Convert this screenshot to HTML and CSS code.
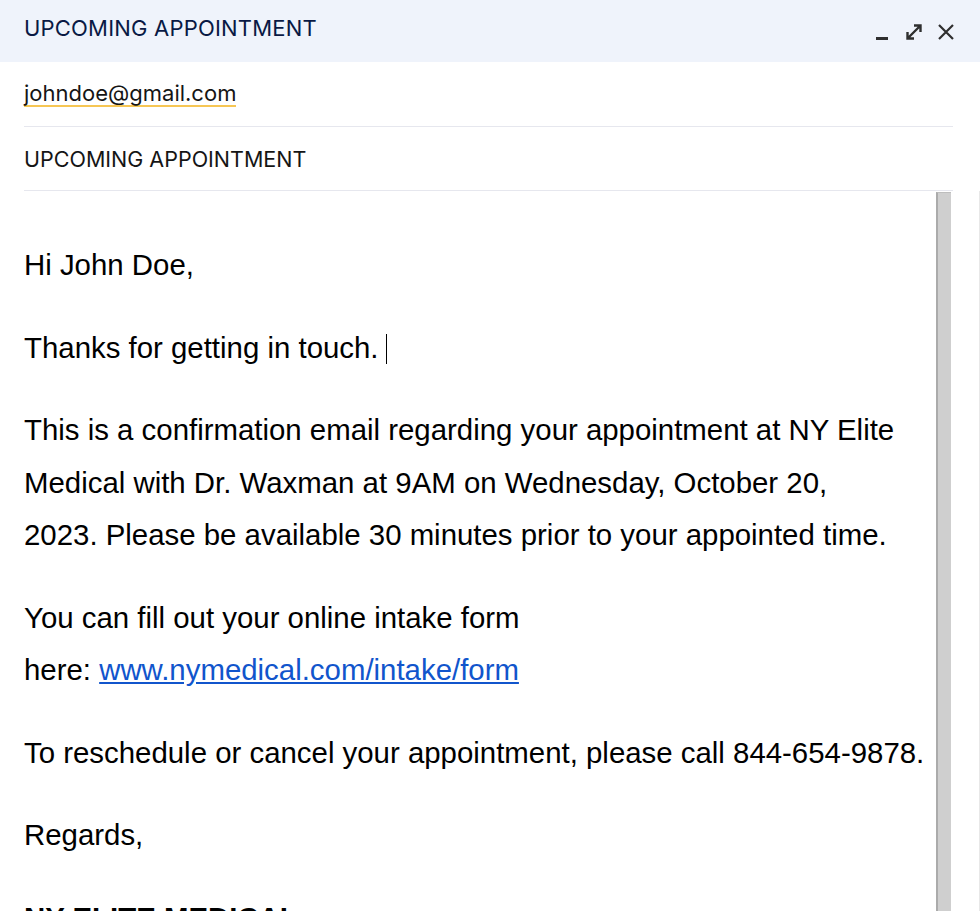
FILE: index.html
```html
<!DOCTYPE html>
<html>
<head>
<meta charset="utf-8">
<link rel="stylesheet" href="styles.css">
</head>
<body>
<div class="window">
  <div class="header">
    <div class="title">UPCOMING APPOINTMENT</div>
    <div class="controls">
      <svg class="ic" width="20" height="20" viewBox="0 0 20 20"><rect x="4" y="15" width="12" height="3" fill="#2f2f2f"/></svg>
      <svg class="ic" width="20" height="20" viewBox="0 0 20 20"><path d="M3.5 16.5 L16.5 3.5 M10 3.5 H16.5 V10 M3.5 10 V16.5 H10" stroke="#2f2f2f" stroke-width="2.4" fill="none"/></svg>
      <svg class="ic" width="20" height="20" viewBox="0 0 20 20"><path d="M3 3 L17 17 M17 3 L3 17" stroke="#2f2f2f" stroke-width="2.2" fill="none"/></svg>
    </div>
  </div>
  <div class="fields">
    <div class="row to"><span class="chip">johndoe@gmail.com</span></div>
    <div class="row subject">UPCOMING APPOINTMENT</div>
  </div>
  <div class="main">
    <div class="content">
      <p>Hi John Doe,</p>
      <p>Thanks for getting in touch.<span class="caret"></span></p>
      <p>This is a confirmation email regarding your appointment at NY Elite<br>Medical with Dr. Waxman at 9AM on Wednesday, October 20,<br>2023. Please be available 30 minutes prior to your appointed time.</p>
      <p>You can fill out your online intake form<br>here: <a href="#">www.nymedical.com/intake/form</a></p>
      <p>To reschedule or cancel your appointment, please call 844-654-9878.</p>
      <p>Regards,</p>
      <p class="sig">NY ELITE MEDICAL</p>
    </div>
    <div class="scrollbar"></div>
    <div class="edge"></div>
  </div>
</div>
</body>
</html>
```
FILE: styles.css
```css
html, body {
  margin: 0;
  padding: 0;
  background: #ffffff;
}
.window {
  width: 980px;
  height: 911px;
  overflow: hidden;
  display: flex;
  flex-direction: column;
  background: #ffffff;
}
.header {
  height: 62px;
  flex: none;
  background: #eff3fb;
  display: flex;
  align-items: center;
  justify-content: space-between;
  padding: 0 24px;
}
.title {
  font-family: Inter, "Liberation Sans", sans-serif;
  font-size: 22px;
  color: #091944;
  letter-spacing: 0.2px;
  padding-bottom: 6px;
}
.controls {
  display: flex;
  gap: 12px;
  align-items: center;
  padding-top: 2px;
}
.ic { display: block; }
.fields {
  margin: 0 27px 0 24px;
  font-family: Inter, "Liberation Sans", sans-serif;
  color: #151515;
}
.row {
  border-bottom: 1.5px solid #e6e7ee;
  display: flex;
  align-items: center;
}
.to {
  height: 64px;
  font-size: 22px;
}
.chip {
  border-bottom: 2px solid #f6c654;
  line-height: 22px;
  padding-bottom: 1px;
}
.subject {
  height: 63px;
  font-size: 21.5px;
}
.main {
  flex: 1;
  display: flex;
  min-height: 0;
}
.content {
  flex: 1;
  padding: 48px 0 0 24px;
  font-family: "Liberation Sans", Arial, sans-serif;
  font-size: 29.4px;
  line-height: 52.5px;
  color: #000000;
  white-space: nowrap;
}
.content p {
  margin: 0 0 30px 0;
}
.content a {
  color: #1155cc;
  text-decoration: underline;
}
.sig {
  font-weight: bold;
}
.caret {
  display: inline-block;
  width: 1px;
  height: 30px;
  background: #000;
  margin-left: 7px;
  vertical-align: -6px;
}
.scrollbar {
  width: 13px;
  flex: none;
  background: #cfcfcf;
  border-left: 2px solid #ababab;
  border-top: 1px solid #bdbdbd;
  margin-top: 1px;
}
.edge {
  width: 28px;
  flex: none;
  border-right: 1px solid #e8e8e8;
}
```
